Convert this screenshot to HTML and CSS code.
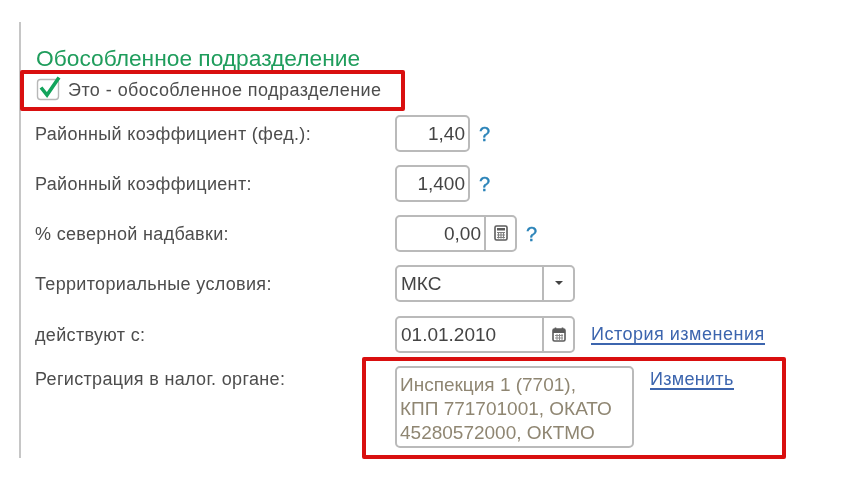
FILE: index.html
```html
<!DOCTYPE html>
<html lang="ru">
<head>
<meta charset="utf-8">
<title>Обособленное подразделение</title>
<link rel="stylesheet" href="styles.css">
</head>
<body>
<main class="panel">
  <h2 class="title">Обособленное подразделение</h2>
  <label class="check-row">
    <svg class="checkbox" width="25" height="24" viewBox="0 0 25 24">
      <rect x="1.500" y="1.500" width="21" height="20" rx="3" fill="#fff" stroke="#b8b8b8" stroke-width="1.400"/>
      <path d="M5 9.500l6 7.500L23 -0.500" fill="none" stroke="#13a45c" stroke-width="3.600"/>
    </svg>
    <span>Это - обособленное подразделение</span>
  </label>
  <div class="form">
    <div class="row">
      <span class="label">Районный коэффициент (фед.):</span>
      <div class="field w75"><span class="value right">1,40</span></div>
      <a class="help">?</a>
    </div>
    <div class="row">
      <span class="label">Районный коэффициент:</span>
      <div class="field w75"><span class="value right">1,400</span></div>
      <a class="help">?</a>
    </div>
    <div class="row">
      <span class="label">% северной надбавки:</span>
      <div class="field w122">
        <span class="value right">0,00</span>
        <span class="btn btn-calc">
          <svg width="14" height="16" viewBox="0 0 14 16">
            <rect x="1" y="1" width="12" height="14" rx="1.500" fill="#fff" stroke="#5c5c5c" stroke-width="1.600"/>
            <rect x="3" y="3" width="8" height="2.500" fill="#5c5c5c"/>
            <path d="M3 7.500h8M3 10h8M3 12.500h8M4.500 7v6.500M7 7v6.500M9.500 7v6.500" stroke="#808080" stroke-width="1.100"/>
          </svg>
        </span>
      </div>
      <a class="help">?</a>
    </div>
    <div class="row">
      <span class="label">Территориальные условия:</span>
      <div class="field w180">
        <span class="value">МКС</span>
        <span class="btn btn-wide"><i class="caret"></i></span>
      </div>
    </div>
    <div class="row row-date">
      <span class="label">действуют с:</span>
      <div class="field w180">
        <span class="value">01.01.2010</span>
        <span class="btn btn-wide">
          <svg width="14" height="15" viewBox="0 0 14 15">
            <rect x="1" y="2" width="12" height="12" rx="1.500" fill="#fff" stroke="#5c5c5c" stroke-width="1.600"/>
            <rect x="1" y="2" width="12" height="4" fill="#5c5c5c"/>
            <path d="M3.500 0.500v2.500M10.500 0.500v2.500" stroke="#5c5c5c" stroke-width="1.600"/>
            <path d="M3 8.500h8M3 11h8M5 7v6M7.500 7v6M10 7v6" stroke="#8c8c8c" stroke-width="1"/>
          </svg>
        </span>
      </div>
      <a class="link link-history">История изменения</a>
    </div>
    <div class="row row-reg">
      <span class="label">Регистрация в налог. органе:</span>
      <div class="memo">Инспекция 1 (7701),<br>КПП 771701001, ОКАТО<br>45280572000, ОКТМО</div>
      <a class="link link-change">Изменить</a>
    </div>
  </div>
  <div class="mark mark-check"></div>
  <div class="mark mark-reg"></div>
</main>
</body>
</html>
```
FILE: styles.css
```css
* { box-sizing: border-box; }
html, body { margin: 0; background: #fff; }
body {
  width: 857px;
  height: 485px;
  overflow: hidden;
  font-family: "Liberation Sans", Arial, sans-serif;
  color: #4d4d4d;
}
.panel {
  position: relative;
  margin: 22px 0 0 19px;
  width: 800px;
  height: 436px;
  border-left: 2px solid #c6c6c6;
  padding: 0 0 0 15px;
  filter: blur(0.35px);
}
.title {
  margin: 0;
  padding-top: 24px;
  height: 56px;
  font-size: 22.75px;
  line-height: 25px;
  font-weight: 400;
  color: #1f9d5c;
}
.check-row {
  display: flex;
  align-items: center;
  gap: 7px;
  height: 24px;
  font-size: 18px;
  letter-spacing: 0.44px;
}
.checkbox { overflow: visible; }
.form {
  display: flex;
  flex-direction: column;
  gap: 14px;
  margin-top: 13px;
}
.row {
  display: flex;
  align-items: center;
  height: 36px;
  font-size: 18px;
}
.label {
  flex: 0 0 360px;
  margin-left: -1px;
  padding-top: 2px;
  letter-spacing: 0.33px;
}
.field {
  display: flex;
  align-items: stretch;
  height: 37px;
  border: 2px solid #bababa;
  border-radius: 5px;
  background: #fff;
  font-size: 19px;
}
.w75 { flex: 0 0 75px; }
.w122 { flex: 0 0 122px; }
.w180 { flex: 0 0 180px; }
.value {
  flex: 1;
  display: flex;
  align-items: center;
  padding: 2px 3px 0 4px;
  color: #444;
}
.right { justify-content: flex-end; }
.btn {
  display: flex;
  align-items: center;
  justify-content: center;
  border-left: 2px solid #bababa;
}
.btn-calc { flex: 0 0 31px; }
.btn-wide { flex: 0 0 31px; }
.caret {
  width: 0;
  height: 0;
  border-left: 4px solid transparent;
  border-right: 4px solid transparent;
  border-top: 4px solid #444;
}
.help {
  margin-left: 9px;
  padding-top: 2px;
  font-size: 20px;
  color: #2a83b8;
  -webkit-text-stroke: 0.4px #2a83b8;
}
.row-date { margin-top: 1px; }
.link {
  color: #3c65ae;
  border-bottom: 2px solid #3c65ae;
  padding-top: 3px;
  line-height: 17px;
  letter-spacing: 0.5px;
}
.link-history { margin-left: 16px; }
.row-reg {
  align-items: flex-start;
  height: 82px;
}
.row-reg .label { padding-top: 3px; }
.memo {
  flex: 0 0 239px;
  height: 82px;
  border: 2px solid #bababa;
  border-radius: 5px;
  padding: 5px 3px;
  font-size: 19px;
  line-height: 24px;
  color: #8f8672;
  white-space: nowrap;
  overflow: hidden;
}
.link-change { margin: 2px 0 0 16px; letter-spacing: 0.3px; }
.mark {
  position: absolute;
  border: 4px solid #d90f0f;
  border-radius: 2px;
}
.mark-check { left: -1px; top: 48px; width: 385px; height: 41px; }
.mark-reg { left: 341px; top: 335px; width: 424px; height: 102px; }
```
